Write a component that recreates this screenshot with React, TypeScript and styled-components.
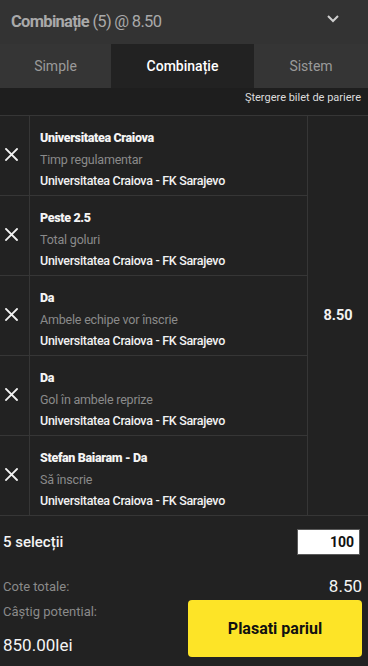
import React from "react";
import styled, { createGlobalStyle } from "styled-components";

const GlobalStyle = createGlobalStyle`
  html, body {
    margin: 0;
    padding: 0;
    background: #222222;
    font-family: Roboto, "Liberation Sans", Arial, sans-serif;
  }
`;

interface Selection {
  pick: string;
  market: string;
  event: string;
}

const selections: Selection[] = [
  { pick: "Universitatea Craiova", market: "Timp regulamentar", event: "Universitatea Craiova - FK Sarajevo" },
  { pick: "Peste 2.5", market: "Total goluri", event: "Universitatea Craiova - FK Sarajevo" },
  { pick: "Da", market: "Ambele echipe vor înscrie", event: "Universitatea Craiova - FK Sarajevo" },
  { pick: "Da", market: "Gol în ambele reprize", event: "Universitatea Craiova - FK Sarajevo" },
  { pick: "Stefan Baiaram - Da", market: "Să înscrie", event: "Universitatea Craiova - FK Sarajevo" },
];

const tabs = [
  { label: "Simple", width: 111 },
  { label: "Combinație", width: 143 },
  { label: "Sistem", width: 114 },
];

const CloseIcon = () => (
  <svg width="13" height="13" viewBox="0 0 13 13">
    <path d="M1 1 L12 12 M12 1 L1 12" stroke="#f2f2f2" strokeWidth="1.8" strokeLinecap="square" />
  </svg>
);

const Chevron = () => (
  <svg width="12" height="8" viewBox="0 0 12 8">
    <path d="M1 1 L6 6 L11 1" stroke="#cfcfcf" strokeWidth="2" fill="none" />
  </svg>
);

export default function App() {
  const [active, setActive] = React.useState(1);
  return (
    <Slip>
      <GlobalStyle />
      <Header>
        <Title>
          <strong>Combinație</strong> (5) @ 8.50
        </Title>
        <Toggle>
          <Chevron />
        </Toggle>
      </Header>
      <Tabs>
        {tabs.map((t, i) => (
          <Tab key={t.label} $active={i === active} $width={t.width} onClick={() => setActive(i)}>
            {t.label}
          </Tab>
        ))}
      </Tabs>
      <Toolbar>
        <ClearLink>Ştergere bilet de pariere</ClearLink>
      </Toolbar>
      <Selections>
        <List>
          {selections.map((s, i) => (
            <Row key={i}>
              <RemoveCell>
                <CloseIcon />
              </RemoveCell>
              <Info>
                <Pick>{s.pick}</Pick>
                <Market>{s.market}</Market>
                <Event>{s.event}</Event>
              </Info>
            </Row>
          ))}
        </List>
        <Odds>8.50</Odds>
      </Selections>
      <Footer>
        <StakeRow>
          <Count>5 selecții</Count>
          <StakeInput value="100" readOnly />
        </StakeRow>
        <TotalRow>
          <Label>Cote totale:</Label>
          <Value>8.50</Value>
        </TotalRow>
        <PayoutRow>
          <Payout>
            <Label>Câștig potential:</Label>
            <Value>850.00lei</Value>
          </Payout>
          <PlaceButton>Plasati pariul</PlaceButton>
        </PayoutRow>
      </Footer>
    </Slip>
  );
}

const Slip = styled.div`
  width: 368px;
  min-height: 666px;
  background: #222222;
`;

const Header = styled.div`
  height: 44px;
  background: #333333;
  display: flex;
  align-items: center;
  justify-content: space-between;
  padding: 0 29px 2px 11px;
  box-sizing: border-box;
`;

const Title = styled.div`
  font-size: 16.5px;
  letter-spacing: -0.7px;
  color: #a9a9a9;
  strong {
    font-weight: 700;
  }
`;

const Toggle = styled.div`
  display: flex;
  margin-bottom: 4px;
`;

const Tabs = styled.div`
  display: flex;
  height: 44px;
  background: #353535;
`;

const Tab = styled.div<{ $active: boolean; $width: number }>`
  width: ${(p) => p.$width}px;
  display: flex;
  align-items: center;
  justify-content: center;
  font-size: 14px;
  cursor: pointer;
  background: ${(p) => (p.$active ? "#222222" : "#353535")};
  color: ${(p) => (p.$active ? "#ffffff" : "#9a9a9a")};
  font-weight: ${(p) => (p.$active ? 500 : 400)};
`;

const Toolbar = styled.div`
  height: 28px;
  background: #1e1e1e;
  display: flex;
  justify-content: flex-end;
  padding: 3px 7px 0 0;
  box-sizing: border-box;
  border-bottom: 1px solid #363636;
`;

const ClearLink = styled.span`
  font-size: 11px;
  color: #dcdcdc;
`;

const Selections = styled.div`
  display: flex;
  border-bottom: 1px solid #363636;
`;

const List = styled.div`
  width: 307px;
  border-right: 1px solid #363636;
`;

const Row = styled.div`
  display: flex;
  height: 79px;
  border-bottom: 1px solid #363636;
  &:last-child {
    border-bottom: none;
  }
`;

const RemoveCell = styled.div`
  width: 30px;
  border-right: 1px solid #363636;
  display: flex;
  align-items: center;
  padding: 0 0 2px 5px;
  box-sizing: border-box;
`;

const Info = styled.div`
  padding: 11px 0 0 10px;
  display: flex;
  flex-direction: column;
  line-height: 21.5px;
`;

const Pick = styled.div`
  font-size: 12.5px;
  font-weight: 900;
  letter-spacing: -0.35px;
  color: #f4f4f4;
`;

const Market = styled.div`
  font-size: 12.5px;
  letter-spacing: -0.2px;
  color: #8a8a8a;
`;

const Event = styled.div`
  font-size: 12.5px;
  font-weight: 500;
  letter-spacing: -0.3px;
  color: #f2f2f2;
`;

const Odds = styled.div`
  flex: 1;
  display: flex;
  align-items: center;
  justify-content: center;
  font-size: 14.5px;
  font-weight: 700;
  color: #f2f2f2;
`;

const Footer = styled.div`
  padding: 13px 6px 0 3px;
`;

const StakeRow = styled.div`
  display: flex;
  align-items: center;
  justify-content: space-between;
  height: 26px;
  padding-right: 2px;
`;

const Count = styled.span`
  font-size: 15px;
  font-weight: 500;
  color: #f4f4f4;
`;

const StakeInput = styled.input`
  width: 63px;
  height: 26px;
  box-sizing: border-box;
  border: 1px solid #5a5a5a;
  background: #ffffff;
  text-align: right;
  padding: 0 5px;
  font-family: Roboto, "Liberation Sans", Arial, sans-serif;
  font-size: 14px;
  font-weight: 700;
  color: #111111;
  outline: none;
`;

const TotalRow = styled.div`
  display: flex;
  align-items: center;
  justify-content: space-between;
  height: 22px;
  margin-top: 20px;
`;

const Label = styled.span`
  font-size: 13px;
  color: #8a8a8a;
`;

const Value = styled.span`
  font-size: 17px;
  color: #f4f4f4;
`;

const PayoutRow = styled.div`
  display: flex;
  justify-content: space-between;
  margin-top: 3px;
`;

const Payout = styled.div`
  display: flex;
  flex-direction: column;
  padding-top: 4px;
  gap: 16px;
`;

const PlaceButton = styled.button`
  width: 174px;
  height: 57px;
  border: none;
  border-radius: 4px;
  background: #fde427;
  color: #111111;
  font-family: Roboto, "Liberation Sans", Arial, sans-serif;
  font-size: 16px;
  font-weight: 700;
  cursor: pointer;
`;
